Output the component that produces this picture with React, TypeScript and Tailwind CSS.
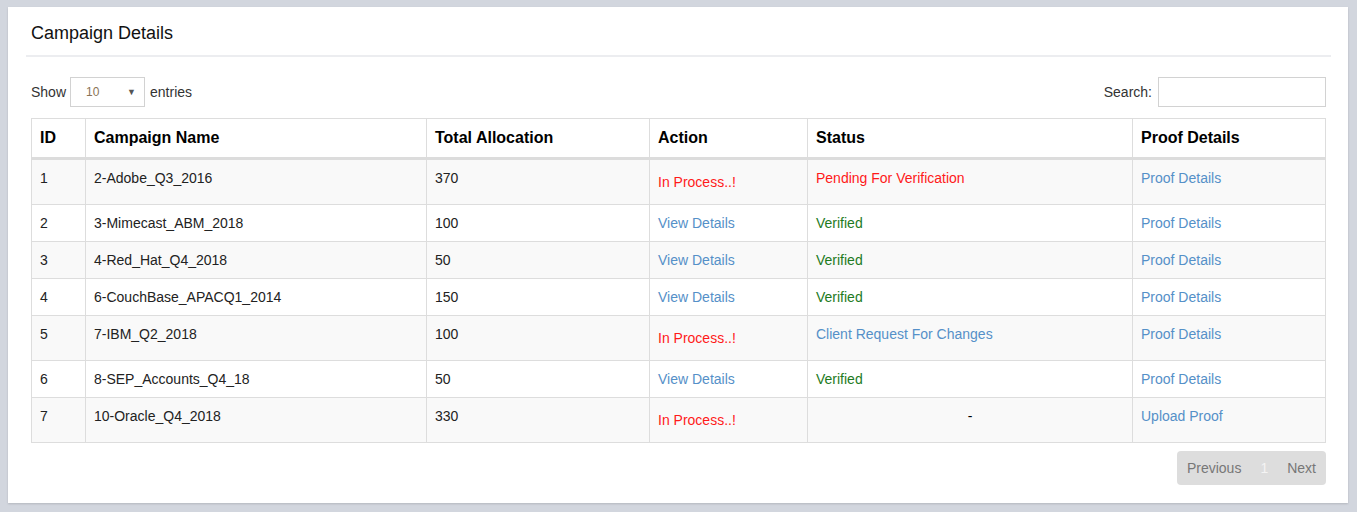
import React from 'react';

type Row = {
  id: number;
  name: string;
  total: number;
  inProcess: boolean;
  status: 'pending' | 'verified' | 'changes' | 'none';
  proof: string;
};

const rows: Row[] = [
  { id: 1, name: '2-Adobe_Q3_2016', total: 370, inProcess: true, status: 'pending', proof: 'Proof Details' },
  { id: 2, name: '3-Mimecast_ABM_2018', total: 100, inProcess: false, status: 'verified', proof: 'Proof Details' },
  { id: 3, name: '4-Red_Hat_Q4_2018', total: 50, inProcess: false, status: 'verified', proof: 'Proof Details' },
  { id: 4, name: '6-CouchBase_APACQ1_2014', total: 150, inProcess: false, status: 'verified', proof: 'Proof Details' },
  { id: 5, name: '7-IBM_Q2_2018', total: 100, inProcess: true, status: 'changes', proof: 'Proof Details' },
  { id: 6, name: '8-SEP_Accounts_Q4_18', total: 50, inProcess: false, status: 'verified', proof: 'Proof Details' },
  { id: 7, name: '10-Oracle_Q4_2018', total: 330, inProcess: true, status: 'none', proof: 'Upload Proof' },
];

function StatusCell({ status }: { status: Row['status'] }) {
  if (status === 'pending') return <span className="text-[#ff1a1a]">Pending For Verification</span>;
  if (status === 'verified') return <span className="text-[#1e7b1e]">Verified</span>;
  if (status === 'changes') return <a className="text-[#5590c8] cursor-pointer">Client Request For Changes</a>;
  return <div className="text-center text-black">-</div>;
}

export default function App() {
  return (
    <div className="min-h-[512px] bg-[#d2d6de] pt-[7px] pl-[8px] pr-[9px] pb-[8px] font-['Liberation_Sans',Arial,sans-serif] text-[14px] text-[#333]">
      <div className="bg-white shadow-[0_1px_2px_rgba(0,0,0,0.15)] pb-[18px]">
        {/* box header */}
        <div className="ml-[18px] mr-[17px] h-[50px] flex items-center pt-[3px] px-[5px] border-b-2 border-[#ecedf0]">
          <h3 className="text-[18px] text-[#111] leading-none">Campaign Details</h3>
        </div>

        <div className="px-[23px]">
          {/* controls */}
          <div className="flex items-center justify-between mt-[20px] h-[30px] -mr-[1px]">
            <div className="flex items-center gap-[5px] text-[#333]">
              <span>Show</span>
              <div className="relative -ml-[1px] w-[75px] h-[30px] border border-[#d2d2d2] bg-white flex items-center">
                <span className="pl-[15px] text-[12px] text-[#8a7355]">10</span>
                <span className="absolute right-[8px] top-[8px] text-[9px] text-[#555]">▼</span>
              </div>
              <span>entries</span>
            </div>
            <div className="flex items-center gap-[6px]">
              <span>Search:</span>
              <div className="w-[168px] h-[30px] border border-[#d2d2d2] bg-white" />
            </div>
          </div>

          {/* table */}
          <table className="mt-[11px] w-full border-collapse border border-[#ddd] table-fixed">
            <colgroup>
              <col className="w-[54px]" />
              <col className="w-[341px]" />
              <col className="w-[223px]" />
              <col className="w-[158px]" />
              <col className="w-[325px]" />
              <col className="w-[193px]" />
            </colgroup>
            <thead>
              <tr className="text-[16px] font-bold text-black text-left">
                <th className="border border-[#ddd] border-b-[3px] border-b-[#dcdcdc] px-[8px] py-[8px] leading-[22px]">ID</th>
                <th className="border border-[#ddd] border-b-[3px] border-b-[#dcdcdc] px-[8px] py-[8px] leading-[22px]">Campaign Name</th>
                <th className="border border-[#ddd] border-b-[3px] border-b-[#dcdcdc] px-[8px] py-[8px] leading-[22px]">Total Allocation</th>
                <th className="border border-[#ddd] border-b-[3px] border-b-[#dcdcdc] px-[8px] py-[8px] leading-[22px]">Action</th>
                <th className="border border-[#ddd] border-b-[3px] border-b-[#dcdcdc] px-[8px] py-[8px] leading-[22px]">Status</th>
                <th className="border border-[#ddd] border-b-[3px] border-b-[#dcdcdc] px-[8px] py-[8px] leading-[22px]">Proof Details</th>
              </tr>
            </thead>
            <tbody>
              {rows.map((r, i) => (
                <tr key={r.id} className={i % 2 === 0 ? 'bg-[#f9f9f9]' : 'bg-white'}>
                  <td className="border border-[#ddd] p-[8px] leading-[20px] align-top text-[#222]">{r.id}</td>
                  <td className="border border-[#ddd] p-[8px] leading-[20px] align-top text-[#222]">{r.name}</td>
                  <td className="border border-[#ddd] p-[8px] leading-[20px] align-top text-[#222]">{r.total}</td>
                  <td className="border border-[#ddd] p-[8px] leading-[20px] align-top">
                    {r.inProcess ? (
                      <div className="py-[4px] text-[#ff1a1a]">In Process..!</div>
                    ) : (
                      <a className="text-[#5590c8] cursor-pointer">View Details</a>
                    )}
                  </td>
                  <td className="border border-[#ddd] p-[8px] leading-[20px] align-top">
                    <StatusCell status={r.status} />
                  </td>
                  <td className="border border-[#ddd] p-[8px] leading-[20px] align-top">
                    <a className="text-[#5590c8] cursor-pointer">{r.proof}</a>
                  </td>
                </tr>
              ))}
            </tbody>
          </table>

          {/* pagination */}
          <div className="flex justify-end mt-[8px] -mr-[1px]">
            <div className="flex h-[34px] items-center bg-[#dddddd] rounded-[4px] text-[#777]">
              <span className="px-[10px]">Previous</span>
              <span className="px-[9px] text-[#f4f4f4]">1</span>
              <span className="px-[10px]">Next</span>
            </div>
          </div>
        </div>
      </div>
    </div>
  );
}
